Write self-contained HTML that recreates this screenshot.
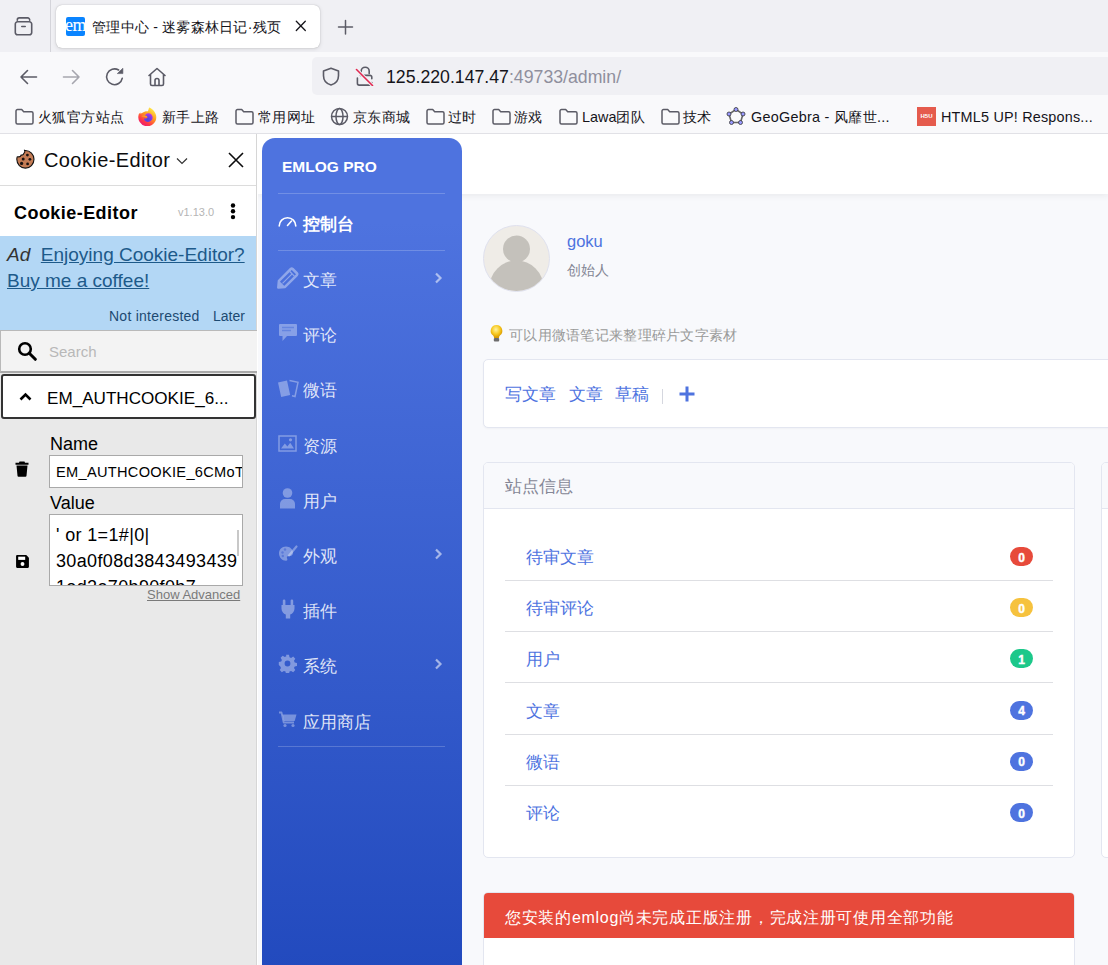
<!DOCTYPE html>
<html><head><meta charset="utf-8">
<style>
*{box-sizing:border-box;margin:0;padding:0}
html,body{width:1108px;height:965px;overflow:hidden;background:#fff;font-family:"Liberation Sans",sans-serif;color:#15141a}
.abs{position:absolute}
svg{display:block}
/* browser chrome */
#tabs{position:absolute;left:0;top:0;width:1108px;height:52px;background:#f0f0f4}
#nav{position:absolute;left:0;top:52px;width:1108px;height:48px;background:#f9f9fb}
#bm{position:absolute;left:0;top:100px;width:1108px;height:34px;background:#f9f9fb;border-bottom:1px solid #e1e1e6}
.bmi{position:absolute;top:0;height:33px;line-height:34px;letter-spacing:.45px;font-size:14.4px;color:#15141a;white-space:nowrap}
/* cookie editor */
#ce{position:absolute;left:0;top:134px;width:257px;height:831px;background:#e9e9e9;border-right:1px solid #d6d6d6}
/* page */
#page{position:absolute;left:258px;top:134px;width:850px;height:831px;background:#f8f9fc;overflow:hidden}
#topbar{position:absolute;left:0;top:0;width:850px;height:60px;background:#fff;box-shadow:0 2px 6px rgba(58,59,69,.08)}
#side{position:absolute;left:4px;top:4px;width:200px;height:831px;border-radius:13px 13px 0 0;background:linear-gradient(180deg,#4e73df 10%,#224abe 100%)}
.card{position:absolute;background:#fff;border:1px solid #e3e6f0;border-radius:5px}
</style></head><body>
<div id="tabs">
  <svg class="abs" style="left:13px;top:16px" width="21" height="21" viewBox="0 0 21 21"><g fill="none" stroke="#5b5b66" stroke-width="1.6" stroke-linecap="round" stroke-linejoin="round"><path d="M4.3 4.3V3.9A2 2 0 0 1 6.3 1.9h8.4a2 2 0 0 1 2 2v.4"/><path d="M2.3 8a2.2 2.2 0 0 1 2.2-2.2h12a2.2 2.2 0 0 1 2.2 2.2v8.6a2.2 2.2 0 0 1-2.2 2.2h-12a2.2 2.2 0 0 1-2.2-2.2z"/><path d="M8.8 10.5h3.4"/></g></svg>
  <div class="abs" style="left:50px;top:0;width:1px;height:52px;background:#d4d4da"></div>
  <div class="abs" style="left:56px;top:5px;width:264px;height:43px;background:#fff;border-radius:6px;box-shadow:0 0 1px rgba(0,0,0,.3),0 1px 4px rgba(0,0,0,.12)"></div>
  <div class="abs" style="left:66px;top:17px;width:19px;height:19px;background:#0a84ff;border-radius:2px;overflow:hidden"><span style="position:absolute;left:-1px;top:-1px;font-family:'Liberation Serif',serif;font-size:18px;line-height:19px;color:#fff;letter-spacing:-.5px;-webkit-text-stroke:.1px #fff">em</span></div>
  <div class="abs" style="left:92px;top:16px;letter-spacing:.25px;font-size:14px;line-height:22px;color:#15141a;white-space:nowrap">管理中心 - 迷雾森林日记·残页</div>
  <svg class="abs" style="left:294px;top:19px" width="13" height="13" viewBox="0 0 13 13"><path d="M2.3 2.3l9 9.2M11.3 2.3l-9 9.2" stroke="#15141a" stroke-width="1.3" stroke-linecap="round"/></svg>
  <svg class="abs" style="left:337px;top:19px" width="17" height="17" viewBox="0 0 17 17"><path d="M8.5 1.5v13.5M1.5 8h14" stroke="#5b5b66" stroke-width="1.5" stroke-linecap="round"/></svg>
</div>
<div id="nav">
  <svg class="abs" style="left:19px;top:17px" width="19" height="16" viewBox="0 0 19 16"><path d="M17.5 8H2M8.5 1.5L2 8l6.5 6.5" fill="none" stroke="#5b5b66" stroke-width="1.6" stroke-linecap="round" stroke-linejoin="round"/></svg>
  <svg class="abs" style="left:62px;top:17px" width="19" height="16" viewBox="0 0 19 16"><path d="M1.5 8H17M10.5 1.5L17 8l-6.5 6.5" fill="none" stroke="#a6a6ae" stroke-width="1.6" stroke-linecap="round" stroke-linejoin="round"/></svg>
  <svg class="abs" style="left:105px;top:15px;overflow:visible" width="19" height="19" viewBox="0 0 19 19"><path d="M17.3 11.2A7.9 7.9 0 1 1 13.6 3" fill="none" stroke="#5b5b66" stroke-width="1.6" stroke-linecap="round"/><path d="M17.9 1.2v5.4h-5.6z" fill="#5b5b66" stroke="#5b5b66" stroke-width=".6" stroke-linejoin="round"/></svg>
  <svg class="abs" style="left:147px;top:15px" width="20" height="20" viewBox="0 0 20 20"><path d="M2 8.5L10 1.5l8 7M3.5 7.5v9.5a1.5 1.5 0 0 0 1.5 1.5h10a1.5 1.5 0 0 0 1.5-1.5V7.5M8 18.5v-5a2 2 0 0 1 4 0v5" fill="none" stroke="#5b5b66" stroke-width="1.6" stroke-linecap="round" stroke-linejoin="round"/></svg>
  <div class="abs" style="left:312px;top:5px;width:800px;height:38px;background:#f0f0f4;border-radius:5px"></div>
  <svg class="abs" style="left:321px;top:15px" width="20" height="19" viewBox="0 0 20 19"><path d="M10 1.2L2.5 4.1v4.7c0 4.5 3.2 8 7.5 9.2 4.3-1.2 7.5-4.7 7.5-9.2V4.1z" fill="none" stroke="#5b5b66" stroke-width="1.6" stroke-linejoin="round"/></svg>
  <svg class="abs" style="left:355px;top:14px" width="20" height="20" viewBox="0 0 20 20"><g fill="none" stroke="#5b5b66" stroke-width="1.6" stroke-linecap="round" stroke-linejoin="round"><path d="M6.2 9.4V5.2a4 4 0 0 1 8 0v2.3"/><path d="M5.5 9.4h9.5a1.8 1.8 0 0 1 1.8 1.8v1.5M16.8 16.5v.8a1.8 1.8 0 0 1-1.8 1.8H4.2a1.8 1.8 0 0 1-1.8-1.8V12"/></g><path d="M1.5 3.5l16 16" stroke="#f0f0f4" stroke-width="3.6"/><path d="M1.5 3.5l16 16" stroke="#e22850" stroke-width="1.6" stroke-linecap="round"/></svg>
  <div class="abs" style="left:386px;top:14px;font-size:17.7px;line-height:22px;color:#15141a;white-space:nowrap">125.220.147.47<span style="color:#8f8f9d">:49733/admin/</span></div>
</div>
<div id="bm">
  <svg class="abs" style="left:15px;top:8px" width="19" height="17" viewBox="0 0 19 17"><path d="M1 3a1.5 1.5 0 0 1 1.5-1.5h4.2l2 2.2h7.8A1.5 1.5 0 0 1 18 5.2v9.3a1.5 1.5 0 0 1-1.5 1.5h-14A1.5 1.5 0 0 1 1 14.5z" fill="none" stroke="#5b5b66" stroke-width="1.5" stroke-linejoin="round"/></svg>
  <div class="bmi" style="left:38px">火狐官方站点</div>
  <svg class="abs" style="left:138px;top:6px" width="20" height="20" viewBox="0 0 20 20"><defs><linearGradient id="ffa" x1=".85" y1=".05" x2=".25" y2="1"><stop offset="0" stop-color="#fff44f"/><stop offset=".4" stop-color="#ffa020"/><stop offset=".75" stop-color="#ff3a45"/><stop offset="1" stop-color="#e8157a"/></linearGradient><radialGradient id="ffg" cx="40%" cy="75%" r="70%"><stop offset="0" stop-color="#4a47d6"/><stop offset=".6" stop-color="#7a3ce8"/><stop offset="1" stop-color="#b535e8"/></radialGradient></defs><path d="M15.3 4.2c2 2.2 3 4.6 3 7a9 9 0 1 1-17.6-2.6l.6-1.6.9 1 .5-1.5 1 .9.7-.6C6 5.6 8 5 10 5.3l1.1-3.9c1.9.8 3.2 1.7 4.2 2.8z" fill="url(#ffa)"/><path d="M10.2 7.2c2.6 0 4.5 2 4.5 4.4s-2 4.4-4.5 4.4-4.3-1.6-4.3-3.6c1.6.3 3.3-.2 3.9-1.2-1-.3-2.2-.4-3.4-.2.7-2.2 2-3.8 3.8-3.8z" fill="url(#ffg)"/><path d="M3.2 10.2c1.8-1 4.1-1 6.2-.2l-.9 1.2c-1.6-.5-3.6-.6-5.3-1z" fill="#ffa51f"/></svg>
  <div class="bmi" style="left:162px">新手上路</div>
  <svg class="abs" style="left:235px;top:8px" width="19" height="17" viewBox="0 0 19 17"><path d="M1 3a1.5 1.5 0 0 1 1.5-1.5h4.2l2 2.2h7.8A1.5 1.5 0 0 1 18 5.2v9.3a1.5 1.5 0 0 1-1.5 1.5h-14A1.5 1.5 0 0 1 1 14.5z" fill="none" stroke="#5b5b66" stroke-width="1.5" stroke-linejoin="round"/></svg>
  <div class="bmi" style="left:258px">常用网址</div>
  <svg class="abs" style="left:330px;top:7px" width="19" height="19" viewBox="0 0 19 19"><g fill="none" stroke="#5b5b66" stroke-width="1.5"><circle cx="9.5" cy="9.5" r="8"/><ellipse cx="9.5" cy="9.5" rx="3.5" ry="8"/><path d="M1.5 9.5h16"/></g></svg>
  <div class="bmi" style="left:353px">京东商城</div>
  <svg class="abs" style="left:426px;top:8px" width="19" height="17" viewBox="0 0 19 17"><path d="M1 3a1.5 1.5 0 0 1 1.5-1.5h4.2l2 2.2h7.8A1.5 1.5 0 0 1 18 5.2v9.3a1.5 1.5 0 0 1-1.5 1.5h-14A1.5 1.5 0 0 1 1 14.5z" fill="none" stroke="#5b5b66" stroke-width="1.5" stroke-linejoin="round"/></svg>
  <div class="bmi" style="left:448px">过时</div>
  <svg class="abs" style="left:492px;top:8px" width="19" height="17" viewBox="0 0 19 17"><path d="M1 3a1.5 1.5 0 0 1 1.5-1.5h4.2l2 2.2h7.8A1.5 1.5 0 0 1 18 5.2v9.3a1.5 1.5 0 0 1-1.5 1.5h-14A1.5 1.5 0 0 1 1 14.5z" fill="none" stroke="#5b5b66" stroke-width="1.5" stroke-linejoin="round"/></svg>
  <div class="bmi" style="left:514px">游戏</div>
  <svg class="abs" style="left:559px;top:8px" width="19" height="17" viewBox="0 0 19 17"><path d="M1 3a1.5 1.5 0 0 1 1.5-1.5h4.2l2 2.2h7.8A1.5 1.5 0 0 1 18 5.2v9.3a1.5 1.5 0 0 1-1.5 1.5h-14A1.5 1.5 0 0 1 1 14.5z" fill="none" stroke="#5b5b66" stroke-width="1.5" stroke-linejoin="round"/></svg>
  <div class="bmi" style="left:582px;letter-spacing:0">Lawa<span style="letter-spacing:.45px">团队</span></div>
  <svg class="abs" style="left:661px;top:8px" width="19" height="17" viewBox="0 0 19 17"><path d="M1 3a1.5 1.5 0 0 1 1.5-1.5h4.2l2 2.2h7.8A1.5 1.5 0 0 1 18 5.2v9.3a1.5 1.5 0 0 1-1.5 1.5h-14A1.5 1.5 0 0 1 1 14.5z" fill="none" stroke="#5b5b66" stroke-width="1.5" stroke-linejoin="round"/></svg>
  <div class="bmi" style="left:683px">技术</div>
  <svg class="abs" style="left:726px;top:7px" width="20" height="19" viewBox="0 0 20 19"><path d="M10 2.5l7 4.5-2.5 8.5h-9L3 7z" fill="none" stroke="#666" stroke-width="1.6"/><g fill="#99f" stroke="#333" stroke-width=".8"><circle cx="10" cy="2.5" r="2"/><circle cx="17" cy="7" r="2"/><circle cx="14.5" cy="15.5" r="2"/><circle cx="5.5" cy="15.5" r="2"/><circle cx="3" cy="7" r="2"/></g></svg>
  <div class="bmi" style="left:751px;letter-spacing:.25px">GeoGebra - <span style="letter-spacing:.45px">风靡世</span>...</div>
  <div class="abs" style="left:917px;top:7px;width:19px;height:19px;background:#e55b4d;color:#fff;font-size:6px;font-weight:bold;line-height:19px;text-align:center">H5U</div>
  <div class="bmi" style="left:941px;letter-spacing:.2px">HTML5 UP! Respons...</div>
</div>
<div id="ce">
  <div class="abs" style="left:0;top:0;width:256px;height:102px;background:#fff"></div>
  <div class="abs" style="left:0;top:51px;width:256px;height:1px;background:#dcdcdc"></div>
  <svg class="abs" style="left:15px;top:15px" width="20" height="20" viewBox="0 0 20 20"><g transform="translate(20 0) scale(-1 1)"><path d="M10.5 1.5c-.6.9-.3 2.1.5 2.6.3 1.4 1.6 2.2 2.9 2 .4 1.3 1.8 2 3.1 1.7.3-.1.6 0 .8.2.3.8.4 1.5.4 2.3a8.6 8.8 0 1 1-8.6-8.8c.3 0 .6-.1.9-.2z" fill="#c47c55" stroke="#111" stroke-width="1.1"/></g><g fill="#1a1210"><circle cx="12.4" cy="6.1" r="1.4"/><circle cx="8.2" cy="10" r="1.5"/><circle cx="14.9" cy="10.3" r="1.4"/><circle cx="6.6" cy="14.4" r="1.6"/><circle cx="12.6" cy="14.9" r="1.4"/></g></svg>
  <div class="abs" style="left:44px;top:14px;letter-spacing:.4px;font-size:20px;line-height:24px;color:#0c0c0d;white-space:nowrap">Cookie-Editor</div>
  <svg class="abs" style="left:176px;top:23px" width="12" height="8" viewBox="0 0 12 8"><path d="M1 1.5l5 5 5-5" fill="none" stroke="#333" stroke-width="1.2"/></svg>
  <svg class="abs" style="left:228px;top:18px" width="16" height="16" viewBox="0 0 16 16"><path d="M1 1l14 14M15 1L1 15" stroke="#0c0c0d" stroke-width="1.6"/></svg>
  <div class="abs" style="left:14px;top:67px;letter-spacing:.45px;font-size:18px;font-weight:bold;line-height:24px;color:#000;white-space:nowrap">Cookie-Editor</div>
  <div class="abs" style="left:178px;top:71px;font-size:11px;line-height:14px;color:#b5b5b5;white-space:nowrap">v1.13.0</div>
  <svg class="abs" style="left:229px;top:69px" width="8" height="17" viewBox="0 0 8 17"><g fill="#000"><circle cx="4" cy="2.5" r="2.2"/><circle cx="4" cy="8.3" r="2.2"/><circle cx="4" cy="14.1" r="2.2"/></g></svg>
  <div class="abs" style="left:0;top:102px;width:256px;height:94px;background:#b3d7f5"></div>
  <div class="abs" style="left:7px;top:108px;width:248px;font-size:19px;line-height:26px;color:#1d5a8a;white-space:nowrap"><i style="color:#333">Ad</i>&nbsp; <u>Enjoying Cookie-Editor?</u><br><u>Buy me a coffee!</u></div>
  <div class="abs" style="left:109px;top:173px;letter-spacing:.25px;font-size:14px;line-height:18px;color:#1d4a72;white-space:nowrap">Not interested</div>
  <div class="abs" style="left:213px;top:173px;font-size:14px;line-height:18px;color:#1d4a72;white-space:nowrap">Later</div>
  <div class="abs" style="left:0;top:196px;width:257px;height:43px;background:#f3f3f3;border:1px solid #b9b9b9;border-bottom:2px solid #aaa;border-right:0"></div>
  <svg class="abs" style="left:17px;top:207px" width="21" height="20" viewBox="0 0 21 20"><circle cx="8" cy="8" r="5.8" fill="none" stroke="#000" stroke-width="2.6"/><path d="M12.3 12.3l6 6" stroke="#000" stroke-width="3" stroke-linecap="round"/></svg>
  <div class="abs" style="left:49px;top:208px;font-size:15px;line-height:20px;color:#b8b8b8">Search</div>
  <div class="abs" style="left:1px;top:240px;width:255px;height:45px;background:#fff;border:2px solid #333;border-radius:3px"></div>
  <svg class="abs" style="left:19px;top:258px" width="13" height="9" viewBox="0 0 13 9"><path d="M1.5 7.5l5-5 5 5" fill="none" stroke="#000" stroke-width="2.6"/></svg>
  <div class="abs" style="left:47px;top:253px;font-size:17.1px;line-height:24px;color:#000;white-space:nowrap">EM_AUTHCOOKIE_6...</div>
  <div class="abs" style="left:50px;top:299px;font-size:18px;line-height:22px;color:#000">Name</div>
  <svg class="abs" style="left:15px;top:326px" width="14" height="17" viewBox="0 0 14 17"><path d="M4.5 1.5h5l.5 1.2H13.5v2H.5v-2H4z" fill="#000"/><path d="M1.5 5.5h11l-1 10.3a1 1 0 0 1-1 .9h-7a1 1 0 0 1-1-.9z" fill="#000"/></svg>
  <div class="abs" style="left:49px;top:321px;width:194px;height:33px;background:#fff;border:1px solid #a9a9a9;overflow:hidden"><div style="position:absolute;left:6px;top:6px;font-size:14.6px;letter-spacing:.3px;line-height:20px;color:#000;white-space:nowrap">EM_AUTHCOOKIE_6CMoTc</div></div>
  <div class="abs" style="left:50px;top:358px;font-size:18px;line-height:22px;color:#000">Value</div>
  <svg class="abs" style="left:15px;top:420px" width="15" height="15" viewBox="0 0 14 14"><path d="M1 2a1 1 0 0 1 1-1h8.5L13 3.5V12a1 1 0 0 1-1 1H2a1 1 0 0 1-1-1z" fill="#000"/><rect x="3" y="2.5" width="6.5" height="3" fill="#fff"/><circle cx="7" cy="9.3" r="1.8" fill="#fff"/></svg>
  <div class="abs" style="left:49px;top:380px;width:194px;height:72px;background:#fff;border:1px solid #a9a9a9;overflow:hidden"><div style="position:absolute;left:6px;top:7px;font-size:18px;letter-spacing:.35px;line-height:26px;color:#000;white-space:nowrap">' or 1=1#|0|<br>30a0f08d3843493439<br>1ed2a70b90f0b7</div><div style="position:absolute;left:187px;top:15px;width:2px;height:26px;background:#c8c8c8"></div></div>
  <div class="abs" style="left:147px;top:453px;font-size:13px;line-height:16px;color:#7a7a7a;text-decoration:underline;white-space:nowrap">Show Advanced</div>
</div>
<div id="page">
  <div id="topbar"></div>
  <svg class="abs" style="left:225px;top:91px" width="67" height="67" viewBox="0 0 67 67"><defs><clipPath id="av"><circle cx="33.5" cy="33.5" r="32.5"/></clipPath></defs><circle cx="33.5" cy="33.5" r="33" fill="#efece7" stroke="#dfe1ee" stroke-width="1"/><g clip-path="url(#av)" fill="#c4c1bb"><circle cx="33.5" cy="24" r="13.5"/><ellipse cx="33.5" cy="62.5" rx="27" ry="27"/></g></svg>
  <div class="abs" style="left:309px;top:97px;font-size:16.5px;line-height:20px;color:#4e73df">goku</div>
  <div class="abs" style="left:309px;top:128px;font-size:13.6px;line-height:18px;color:#858796">创始人</div>
  <svg class="abs" style="left:231px;top:190px" width="15" height="19" viewBox="0 0 15 19"><defs><radialGradient id="bulb" cx="45%" cy="35%" r="60%"><stop offset="0" stop-color="#fff3a0"/><stop offset=".6" stop-color="#f7c81e"/><stop offset="1" stop-color="#d99a00"/></radialGradient></defs><path d="M7.5 1a5.8 5.8 0 0 0-3.4 10.5c.6.5.9 1.2.9 2v.5h5v-.5c0-.8.3-1.5.9-2A5.8 5.8 0 0 0 7.5 1z" fill="url(#bulb)"/><rect x="4.8" y="14" width="5.4" height="3.5" rx="1" fill="#6d6d6d"/></svg>
  <div class="abs" style="left:251px;top:192px;letter-spacing:.28px;font-size:14px;line-height:18px;color:#999;white-space:nowrap">可以用微语笔记来整理碎片文字素材</div>
  <div class="card" style="left:225px;top:225px;width:700px;height:69px;box-shadow:0 1px 2px rgba(58,59,69,.04)"></div>
  <div class="abs" style="left:247px;top:250px;font-size:17px;line-height:22px;color:#4e73df;white-space:nowrap">写文章</div>
  <div class="abs" style="left:311px;top:250px;font-size:17px;line-height:22px;color:#4e73df;white-space:nowrap">文章</div>
  <div class="abs" style="left:357px;top:250px;font-size:17px;line-height:22px;color:#4e73df;white-space:nowrap">草稿</div>
  <div class="abs" style="left:404px;top:255px;width:1px;height:15px;background:#d5d7df"></div>
  <svg class="abs" style="left:421px;top:252px" width="16" height="16" viewBox="0 0 16 16"><path d="M8 0.5v15M0.5 8h15" stroke="#4e73df" stroke-width="3"/></svg>
  <div class="card" style="left:225px;top:328px;width:592px;height:396px;overflow:hidden"><div style="position:absolute;left:0;top:0;width:100%;height:46px;background:#f8f9fc;border-bottom:1px solid #e3e6f0"></div></div>
  <div class="abs" style="left:247px;top:341px;font-size:16.5px;line-height:22px;color:#858796;white-space:nowrap">站点信息</div>
  <div class="abs" style="left:268px;top:413.0px;font-size:17px;line-height:22px;color:#4e73df;white-space:nowrap">待审文章</div>
  <div class="abs" style="left:752px;top:413.0px;width:23px;height:19px;border-radius:10px;background:#e74a3b;color:#fff;font-size:12px;font-weight:bold;line-height:19px;text-align:center"><span style="position:relative;top:1.5px;-webkit-text-stroke:.4px #fff">0</span></div>
  <div class="abs" style="left:247px;top:446.0px;width:548px;height:1px;background:#dedfe3"></div>
  <div class="abs" style="left:268px;top:464.2px;font-size:17px;line-height:22px;color:#4e73df;white-space:nowrap">待审评论</div>
  <div class="abs" style="left:752px;top:464.2px;width:23px;height:19px;border-radius:10px;background:#f6c23e;color:#fff;font-size:12px;font-weight:bold;line-height:19px;text-align:center"><span style="position:relative;top:1.5px;-webkit-text-stroke:.4px #fff">0</span></div>
  <div class="abs" style="left:247px;top:497.2px;width:548px;height:1px;background:#dedfe3"></div>
  <div class="abs" style="left:268px;top:515.4px;font-size:17px;line-height:22px;color:#4e73df;white-space:nowrap">用户</div>
  <div class="abs" style="left:752px;top:515.4px;width:23px;height:19px;border-radius:10px;background:#1cc88a;color:#fff;font-size:12px;font-weight:bold;line-height:19px;text-align:center"><span style="position:relative;top:1.5px;-webkit-text-stroke:.4px #fff">1</span></div>
  <div class="abs" style="left:247px;top:548.4px;width:548px;height:1px;background:#dedfe3"></div>
  <div class="abs" style="left:268px;top:566.6px;font-size:17px;line-height:22px;color:#4e73df;white-space:nowrap">文章</div>
  <div class="abs" style="left:752px;top:566.6px;width:23px;height:19px;border-radius:10px;background:#4e73df;color:#fff;font-size:12px;font-weight:bold;line-height:19px;text-align:center"><span style="position:relative;top:1.5px;-webkit-text-stroke:.4px #fff">4</span></div>
  <div class="abs" style="left:247px;top:599.6px;width:548px;height:1px;background:#dedfe3"></div>
  <div class="abs" style="left:268px;top:617.8px;font-size:17px;line-height:22px;color:#4e73df;white-space:nowrap">微语</div>
  <div class="abs" style="left:752px;top:617.8px;width:23px;height:19px;border-radius:10px;background:#4e73df;color:#fff;font-size:12px;font-weight:bold;line-height:19px;text-align:center"><span style="position:relative;top:1.5px;-webkit-text-stroke:.4px #fff">0</span></div>
  <div class="abs" style="left:247px;top:650.8px;width:548px;height:1px;background:#dedfe3"></div>
  <div class="abs" style="left:268px;top:669.0px;font-size:17px;line-height:22px;color:#4e73df;white-space:nowrap">评论</div>
  <div class="abs" style="left:752px;top:669.0px;width:23px;height:19px;border-radius:10px;background:#4e73df;color:#fff;font-size:12px;font-weight:bold;line-height:19px;text-align:center"><span style="position:relative;top:1.5px;-webkit-text-stroke:.4px #fff">0</span></div>
  <div class="card" style="left:843px;top:328px;width:100px;height:396px;overflow:hidden"><div style="position:absolute;left:0;top:0;width:100%;height:46px;background:#f8f9fc;border-bottom:1px solid #e3e6f0"></div></div>
  <div class="card" style="left:225px;top:758px;width:592px;height:200px;overflow:hidden;border-color:#e3e6f0"><div style="position:absolute;left:0;top:0;width:100%;height:45px;background:#e74a3b"></div></div>
  <div class="abs" style="left:247px;top:773px;letter-spacing:.72px;font-size:16px;line-height:22px;color:#fff;white-space:nowrap">您安装的emlog尚未完成正版注册，完成注册可使用全部功能</div>
  <div id="side">
    <div class="abs" style="left:20px;top:20px;font-size:15.5px;font-weight:bold;line-height:18px;color:#fff;white-space:nowrap">EMLOG PRO</div>
    <div class="abs" style="left:16px;top:55px;width:167px;height:1px;background:rgba(255,255,255,.2)"></div>
    <svg class="abs" style="left:16px;top:78px" width="19" height="11" viewBox="0 0 19 11"><path d="M1.2 10a8.3 8.3 0 0 1 16.6 0" fill="none" stroke="#fff" stroke-width="1.6" stroke-linecap="round"/><path d="M9.5 9.5l4-4.5" stroke="#fff" stroke-width="1.6" stroke-linecap="round"/></svg>
    <div class="abs" style="left:41px;top:75px;font-size:16.5px;font-weight:bold;line-height:22px;color:#fff;white-space:nowrap">控制台</div>
    <div class="abs" style="left:16px;top:112px;width:167px;height:1px;background:rgba(255,255,255,.2)"></div>
<svg class="abs" style="left:15px;top:129px;overflow:visible" width="22" height="22" viewBox="0 0 22 22"><g opacity=".38" transform="translate(1.3 20.6) rotate(-45)"><path d="M5.2 -4.3h16.8a1.3 1.3 0 0 1 1.3 1.3v6a1.3 1.3 0 0 1-1.3 1.3H5.2L0 0z" fill="none" stroke="#fff" stroke-width="2.5" stroke-linejoin="round"/><path d="M6 0h13.5M19.5 -3.2v6.4" stroke="#fff" stroke-width="1.2"/><path d="M0 0l5.4-4.3v8.6z" fill="#fff"/></g></svg>
    <div class="abs" style="left:41px;top:132px;font-size:17px;line-height:22px;color:rgba(255,255,255,.85);white-space:nowrap">文章</div>
    <svg class="abs" style="left:172px;top:134px" width="9" height="12" viewBox="0 0 9 12"><path d="M2 1.5l4.5 4.5L2 10.5" fill="none" stroke="rgba(255,255,255,.55)" stroke-width="2.2"/></svg>
<svg class="abs" style="left:16px;top:185px" width="20" height="19" viewBox="0 0 20 19"><path d="M2 1h16a1 1 0 0 1 1 1v10a1 1 0 0 1-1 1H9l-4.5 5v-5H2a1 1 0 0 1-1-1V2a1 1 0 0 1 1-1z" fill="rgba(255,255,255,.35)"/><path d="M4 4.5h12M4 7.5h9" stroke="#4a6fdc" stroke-width="1.3" opacity=".55"/></svg>
    <div class="abs" style="left:41px;top:187px;font-size:17px;line-height:22px;color:rgba(255,255,255,.85);white-space:nowrap">评论</div>
<svg class="abs" style="left:15px;top:241px" width="22" height="19" viewBox="0 0 22 19"><path d="M1 3.5l9-2 3.2 14.5-9 2z" fill="rgba(255,255,255,.35)"/><path d="M12.5 1.5l8.5 1.8-3 14.2-3-0.7" fill="none" stroke="rgba(255,255,255,.35)" stroke-width="1.5"/></svg>
    <div class="abs" style="left:41px;top:242px;font-size:17px;line-height:22px;color:rgba(255,255,255,.85);white-space:nowrap">微语</div>
<svg class="abs" style="left:16px;top:297px" width="19" height="17" viewBox="0 0 19 17"><rect x="1" y="1" width="17" height="15" fill="none" stroke="rgba(255,255,255,.35)" stroke-width="1.5"/><path d="M3 13.5l3.8-5 2.6 3 2.8-3.8 3.8 5.8z" fill="rgba(255,255,255,.35)"/><circle cx="12.5" cy="4.8" r="1.6" fill="rgba(255,255,255,.35)"/></svg>
    <div class="abs" style="left:41px;top:298px;font-size:17px;line-height:22px;color:rgba(255,255,255,.85);white-space:nowrap">资源</div>
<svg class="abs" style="left:17px;top:350px" width="17" height="21" viewBox="0 0 17 21"><circle cx="8.5" cy="5" r="4.8" fill="rgba(255,255,255,.35)"/><path d="M1 20.5v-4.5a5 5 0 0 1 5-5h5a5 5 0 0 1 5 5v4.5z" fill="rgba(255,255,255,.35)"/></svg>
    <div class="abs" style="left:41px;top:353px;font-size:17px;line-height:22px;color:rgba(255,255,255,.85);white-space:nowrap">用户</div>
<svg class="abs" style="left:16px;top:407px" width="20" height="17" viewBox="0 0 20 17"><path d="M8 1.5C3.8 1.5 1 4.5 1 8.3c0 4 3 7.5 7 7.5 1.8 0 1.5-1.5 1-2.5-.5-1.2.2-2.2 1.5-2.2h1.5c2 0 3-1.5 3-3.3C15 4.5 12 1.5 8 1.5z" fill="rgba(255,255,255,.35)"/><path d="M18.5 1.5L11 10.5" stroke="rgba(255,255,255,.35)" stroke-width="2.2" stroke-linecap="round"/><g fill="#4466d4" opacity=".6"><circle cx="4.5" cy="7.5" r="1.2"/><circle cx="7" cy="4.5" r="1.2"/><circle cx="4.8" cy="11" r="1.2"/></g></svg>
    <div class="abs" style="left:41px;top:408px;font-size:17px;line-height:22px;color:rgba(255,255,255,.85);white-space:nowrap">外观</div>
    <svg class="abs" style="left:172px;top:410px" width="9" height="12" viewBox="0 0 9 12"><path d="M2 1.5l4.5 4.5L2 10.5" fill="none" stroke="rgba(255,255,255,.55)" stroke-width="2.2"/></svg>
<svg class="abs" style="left:19px;top:461px" width="14" height="20" viewBox="0 0 14 20"><g opacity=".38" fill="#fff"><rect x="1.8" y="0.5" width="2.6" height="6" rx="1.3"/><rect x="9.6" y="0.5" width="2.6" height="6" rx="1.3"/><path d="M0.5 6h13v3.5c0 3-1.8 5.2-4.3 6V19.5H4.8V15.5C2.3 14.7.5 12.5.5 9.5z"/></g></svg>
    <div class="abs" style="left:41px;top:463px;font-size:17px;line-height:22px;color:rgba(255,255,255,.85);white-space:nowrap">插件</div>
<svg class="abs" style="left:16px;top:516px" width="19" height="19" viewBox="0 0 19 19"><g opacity=".38"><path fill="#fff" fill-rule="evenodd" d="M8 0.8h3l.5 2.4 1.6.7 2.1-1.3 2.1 2.1-1.3 2.1.7 1.6 2.4.5v3l-2.4.5-.7 1.6 1.3 2.1-2.1 2.1-2.1-1.3-1.6.7-.5 2.4H8l-.5-2.4-1.6-.7-2.1 1.3-2.1-2.1 1.3-2.1-.7-1.6L.8 11V8l2.4-.5.7-1.6-1.3-2.1 2.1-2.1 2.1 1.3 1.6-.7zM9.5 6.6a2.9 2.9 0 1 0 0 5.8 2.9 2.9 0 0 0 0-5.8z"/></g></svg>
    <div class="abs" style="left:41px;top:518px;font-size:17px;line-height:22px;color:rgba(255,255,255,.85);white-space:nowrap">系统</div>
    <svg class="abs" style="left:172px;top:520px" width="9" height="12" viewBox="0 0 9 12"><path d="M2 1.5l4.5 4.5L2 10.5" fill="none" stroke="rgba(255,255,255,.55)" stroke-width="2.2"/></svg>
<svg class="abs" style="left:16px;top:573px" width="19" height="17" viewBox="0 0 19 17"><path d="M1 1.5h2.5l2.2 10h10.3" fill="none" stroke="rgba(255,255,255,.35)" stroke-width="1.8" stroke-linejoin="round"/><path d="M4.5 3.5h14l-1.8 6.5H6z" fill="rgba(255,255,255,.35)"/><circle cx="7" cy="14.5" r="1.6" fill="rgba(255,255,255,.35)"/><circle cx="15" cy="14.5" r="1.6" fill="rgba(255,255,255,.35)"/></svg>
    <div class="abs" style="left:41px;top:574px;font-size:17px;line-height:22px;color:rgba(255,255,255,.85);white-space:nowrap">应用商店</div>
    <div class="abs" style="left:16px;top:608px;width:167px;height:1px;background:rgba(255,255,255,.2)"></div>
  </div>
</div>
</body></html>
